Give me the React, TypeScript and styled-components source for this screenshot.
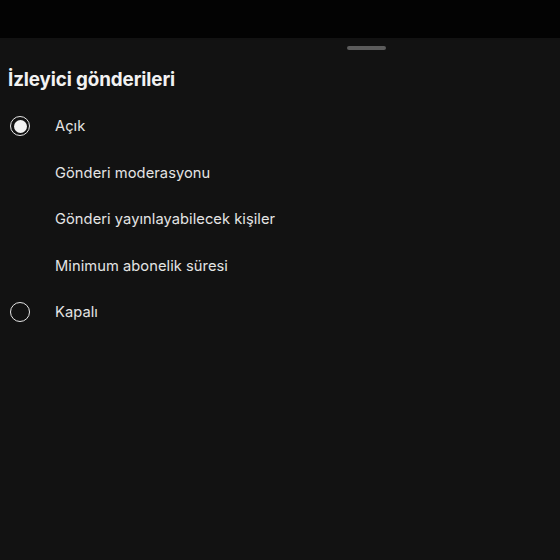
import React, { useState } from 'react'
import styled, { createGlobalStyle } from 'styled-components'

const GlobalStyle = createGlobalStyle`
  html, body {
    margin: 0;
    padding: 0;
    background: #121212;
  }
  #root {
    min-height: 560px;
  }
`

const Page = styled.div`
  display: flex;
  flex-direction: column;
  height: 560px;
  background: #121212;
  font-family: Inter, "Liberation Sans", sans-serif;
`

const StatusBand = styled.div`
  height: 38px;
  background: #030303;
`

const Sheet = styled.div`
  flex: 1;
  display: flex;
  flex-direction: column;
  padding-top: 8px;
`

const Handle = styled.div`
  width: 39px;
  height: 4px;
  border-radius: 2px;
  background: #5c5c5c;
  margin-left: 347px;
`

const Title = styled.h1`
  margin: 0;
  padding: 17px 0 0 8px;
  height: 26px;
  line-height: 26px;
  font-size: 18.8px;
  font-weight: 700;
  color: #f2f2f2;
  letter-spacing: -0.1px;
`

const List = styled.div`
  display: flex;
  flex-direction: column;
  padding-top: 10px;
`

const Row = styled.div`
  display: flex;
  align-items: center;
  height: 46.5px;
  cursor: pointer;
`

const RadioSlot = styled.div`
  width: 55px;
  padding-left: 10px;
  box-sizing: border-box;
  display: flex;
  align-items: center;
`

const Radio = styled.div<{ $checked: boolean }>`
  width: 20px;
  height: 20px;
  box-sizing: border-box;
  border-radius: 50%;
  border: 1.5px solid #e6e6e6;
  display: flex;
  align-items: center;
  justify-content: center;

  &::after {
    content: '';
    display: ${(p) => (p.$checked ? 'block' : 'none')};
    width: 13px;
    height: 13px;
    border-radius: 50%;
    background: #f2f2f2;
  }
`

const Label = styled.div`
  font-size: 14.7px;
  color: #e4e4e4;
  letter-spacing: 0.05px;
`

type Item = { label: string; radio?: 'on' | 'off' }

const items: Item[] = [
  { label: 'Açık', radio: 'on' },
  { label: 'Gönderi moderasyonu' },
  { label: 'Gönderi yayınlayabilecek kişiler' },
  { label: 'Minimum abonelik süresi' },
  { label: 'Kapalı', radio: 'off' },
]

export default function App(): React.ReactElement {
  const [open, setOpen] = useState(true)

  return (
    <Page>
      <GlobalStyle />
      <StatusBand />
      <Sheet>
        <Handle />
        <Title>İzleyici gönderileri</Title>
        <List>
          {items.map((it) => (
            <Row
              key={it.label}
              onClick={() => {
                if (it.radio) setOpen(it.radio === 'on')
              }}
            >
              <RadioSlot>
                {it.radio && <Radio $checked={it.radio === 'on' ? open : !open} />}
              </RadioSlot>
              <Label>{it.label}</Label>
            </Row>
          ))}
        </List>
      </Sheet>
    </Page>
  )
}
